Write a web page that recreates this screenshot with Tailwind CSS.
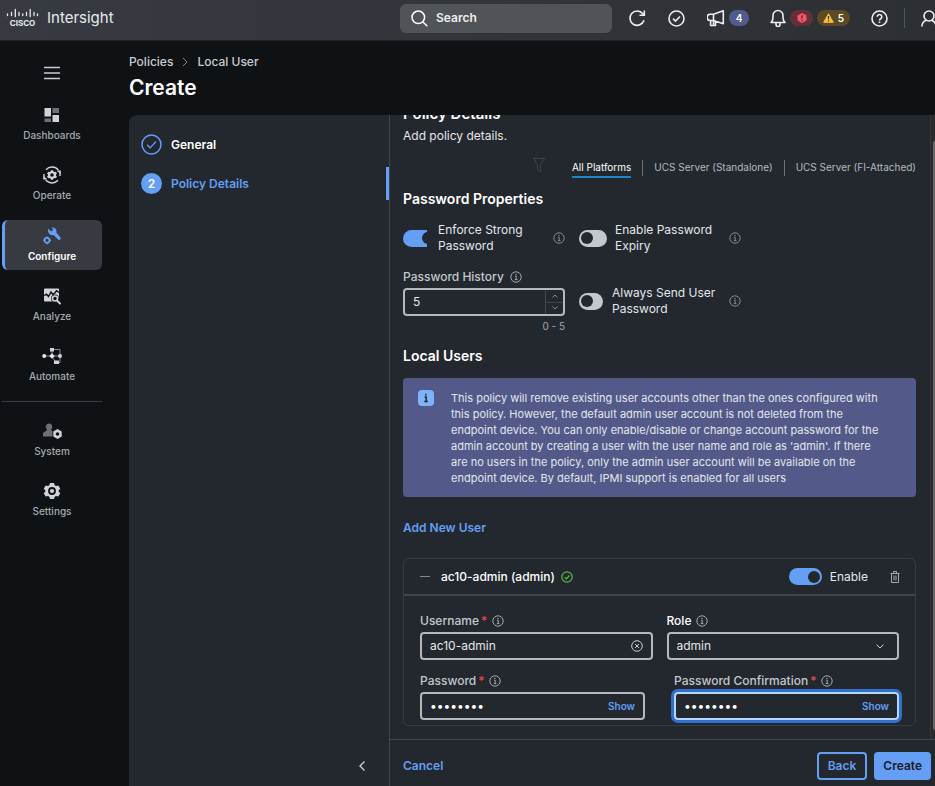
<!DOCTYPE html>
<html lang="en">

<head>
    <meta charset="UTF-8">
    <meta name="viewport" content="width=device-width, initial-scale=1.0">
    <title>Intersight - Create Policy</title>
    <script src="https://cdn.jsdelivr.net/npm/@tailwindcss/browser@4"></script>
</head>

<body class="h-screen flex flex-col overflow-hidden bg-[#0f1214] text-[#e3e6ea] text-[12px] font-['Inter',sans-serif]">

    <!-- Shared icons -->
    <svg class="hidden" aria-hidden="true">
        <symbol id="info" viewBox="0 0 12 12">
            <circle cx="6" cy="6" r="5.2" fill="none" stroke="currentColor" stroke-width="1" />
            <path d="M5 5.2h1.2v3.3M4.8 8.6h2.6" fill="none" stroke="currentColor" stroke-width="1" />
            <circle cx="6" cy="3.4" r=".7" fill="currentColor" />
        </symbol>
    </svg>

    <!-- Top bar -->
    <header class="h-[41px] shrink-0 flex items-start bg-linear-to-r from-[#373b41] to-[#2c3035] border-b border-[#1d2024] overflow-hidden">
        <a href="#" class="flex items-center gap-2 h-9 pl-[6px]">
            <svg class="w-[33px] h-[20px]" viewBox="0 0 33 20" role="img" aria-label="Cisco">
                <path d="M1.5 6v1.5M5.5 4.5v3M9.3 1.5v7M13 4.5v3M16.8 6v1.5M20.5 4.5v3M24.2 1.5v7M28 4.5v3M31.5 6v1.5" fill="none" stroke="#e8eaed" stroke-width="1.3" stroke-linecap="round" />
                <text x="16.5" y="18" text-anchor="middle" font-size="8" font-weight="700" fill="#e8eaed">CISCO</text>
            </svg>
            <span class="text-[15px] text-[#e8eaed]">Intersight</span>
        </a>
        <div class="ml-auto flex items-center h-9 -mr-[2px]">
            <label class="flex items-center gap-2 w-[212px] h-[29px] px-[11px] rounded-md bg-[#505357] text-white">
                <svg class="w-[17px] h-[17px] shrink-0" viewBox="0 0 17 17" fill="none" stroke="currentColor" stroke-width="1.5">
                    <circle cx="7.3" cy="7.3" r="6.3" />
                    <path d="M12 12l4.3 4.3" />
                </svg>
                <input type="search" placeholder="Search" aria-label="Search" class="w-full bg-transparent font-semibold placeholder:text-[#eceef0] outline-none">
            </label>
            <button class="ml-4" aria-label="Refresh">
                <svg class="w-[18px] h-[18px]" viewBox="0 0 18 18" fill="none" stroke="#eceef0" stroke-width="1.6">
                    <path d="M16 11.3A7.2 7.2 0 1 1 14.8 4.7l1 1.3" />
                    <path d="M16.3 1.5v4.8h-4.8" />
                </svg>
            </button>
            <button class="ml-[22px]" aria-label="Tasks">
                <svg class="w-[17px] h-[17px]" viewBox="0 0 17 17" fill="none" stroke="#eceef0" stroke-width="1.6">
                    <circle cx="8.5" cy="8.5" r="7.5" />
                    <path d="M5 8.7l2.5 2.4 4.5-4.6" />
                </svg>
            </button>
            <button class="ml-[22px] flex items-center gap-1" aria-label="Announcements">
                <svg class="w-[18px] h-[18px]" viewBox="0 0 18 18" fill="none" stroke="#eceef0" stroke-width="1.6" stroke-linejoin="round">
                    <path d="M6.5 5.2L16.3 1.8v13L6.5 11.5H3.3a3.1 3.1 0 0 1 0-6.3zM6.5 5.2v11.3H3.6v-5M6.5 12h2v4.5h-2" />
                </svg>
                <span class="w-5 h-4 rounded-full bg-[#535a8c] text-[10px] leading-4 text-center font-semibold text-white">4</span>
            </button>
            <button class="ml-[21px] flex items-center gap-1" aria-label="Alarms">
                <svg class="w-4 h-[18px]" viewBox="0 0 16 18" fill="none" stroke="#eceef0" stroke-width="1.6" stroke-linejoin="round">
                    <path d="M1 13.5c1.3-1.2 2-2.6 2-5V6.500a5 5 0 0 1 10 0v2c0 2.4.7 3.8 2 5zM6 14v1.5a2 2 0 0 0 4 0V14" />
                </svg>
                <span class="flex items-center justify-center w-[23px] h-4 rounded-full bg-[#633038]">
                    <svg class="w-[10px] h-[10px]" viewBox="0 0 10 10">
                        <path d="M5 0l4.5 2.5v5L5 10 .5 7.5v-5z" fill="#f2566a" />
                        <path d="M5 2.2v3.4M5 6.7v1.3" stroke="#5a1d26" stroke-width="1.2" />
                    </svg>
                </span>
                <span class="flex items-center justify-center gap-1 w-[33px] h-4 rounded-full bg-[#5b4a23] text-[10px] font-semibold text-white">
                    <svg class="w-[11px] h-[10px]" viewBox="0 0 11 10">
                        <path d="M5.5.8L10.3 9.3H.7z" fill="#f3c043" stroke="#f3c043" stroke-linejoin="round" />
                        <path d="M5.5 3v3.3M5.5 7.3v1.2" stroke="#4d3b12" stroke-width="1.2" />
                    </svg>
                    5
                </span>
            </button>
            <button class="ml-[21px]" aria-label="Help">
                <svg class="w-[17px] h-[17px]" viewBox="0 0 17 17" fill="none" stroke="#eceef0" stroke-width="1.6">
                    <circle cx="8.5" cy="8.5" r="7.5" />
                    <path d="M6.2 6.8a2.3 2.3 0 1 1 3.5 2c-.9.5-1.2.8-1.2 1.6M8.5 11.4v1.5" />
                </svg>
            </button>
            <span class="ml-4 w-px h-5 bg-[#50555b]"></span>
            <button class="ml-4" aria-label="Account">
                <svg class="w-[16px] h-[17px]" viewBox="0 0 16 17" fill="none" stroke="#eceef0" stroke-width="1.6">
                    <circle cx="8" cy="6" r="5" />
                    <path d="M.8 16.5c.3-3 2-5.3 4.5-6.2M15.2 16.5c-.3-3-2-5.3-4.5-6.2" />
                </svg>
            </button>
        </div>
    </header>

    <div class="flex flex-1 min-h-0">

        <!-- Sidebar -->
        <nav class="w-[129px] shrink-0 pl-[2px] pr-[27px] pt-[25px] text-[10px] leading-4 font-medium text-[#a4a9af]">
            <button class="block mx-auto" aria-label="Menu">
                <svg class="w-4 h-[14px]" viewBox="0 0 16 14" stroke="#c9ccd1" stroke-width="1.5">
                    <path d="M0 1.5h16M0 7h16M0 12.5h16" />
                </svg>
            </button>
            <div class="flex flex-col gap-[10px] mt-5">
                <a href="#" class="h-[50px] flex flex-col items-center gap-[3px] pt-[6px]">
                    <svg class="w-[18px] h-[18px]" viewBox="0 0 18 18">
                        <path d="M1.5 2H8v8.5H1.5zM9.5 9H16v7H9.5z" fill="#d0d3d8" />
                        <path d="M9.5 2H16v5H9.5zM1.5 12.5H8V16H1.5z" fill="#6d7176" />
                    </svg>
                    Dashboards
                </a>
                <a href="#" class="h-[50px] flex flex-col items-center gap-[3px] pt-[6px]">
                    <svg class="w-[18px] h-[18px] text-[#d0d3d8]" viewBox="0 0 18 18">
                        <path d="M3 3.7a8 8 0 0 1 12.5.6M15 14.3a8 8 0 0 1-12.5-.6M1 8v4.5M17 10V5.5" fill="none" stroke="currentColor" stroke-width="1.4" />
                        <path d="M13.8 5l3.9-.8-.2 3.6zM4.2 13l-3.9.8.2-3.6z" fill="currentColor" />
                        <path d="M8 4.3h2l.5 1.2 1 .5 1.4-.2 1 1.7-.9 1v1l.9 1-1 1.7-1.4-.2-1 .5-.5 1.2H8l-.5-1.2-1-.5-1.4.2-1-1.7.9-1v-1l-.9-1 1-1.7 1.4.2 1-.5zM9 7.200a1.8 1.8 0 1 0 0 3.6 1.8 1.8 0 0 0 0-3.6z" fill="currentColor" fill-rule="evenodd" />
                    </svg>
                    Operate
                </a>
                <a href="#" aria-current="page" class="h-[50px] flex flex-col items-center gap-[3px] pt-[7px] pr-[3px] rounded-md border-l-3 border-[#649ef5] bg-[#373b41] text-white font-semibold">
                    <svg class="w-[18px] h-[18px]" viewBox="0 0 18 18" fill="#649ef5">
                        <path d="M5.3 1.8L8.2 4.5 10.3 2.6 8.5.6c2.8-.8 5.7 1.6 4.8 5l4.2 4.8c1 1.4-.9 3.2-2.3 2.2L10.5 8C7.3 9 4 5.5 5.3 1.8z" />
                        <circle cx="4" cy="13.3" r="2.5" fill="none" stroke="#649ef5" stroke-width="1.8" />
                        <path d="M4 9.5v1M4 16v1.2M.2 13.3h1M7 13.3h1" stroke="#649ef5" stroke-width="1.4" />
                    </svg>
                    Configure
                </a>
                <a href="#" class="h-[50px] flex flex-col items-center gap-[3px] pt-[7px]">
                    <svg class="w-[18px] h-[18px]" viewBox="0 0 18 18">
                        <path d="M2 1.5h13a1 1 0 0 1 1 1v12H2a1 1 0 0 1-1-1v-11a1 1 0 0 1 1-1z" fill="#d0d3d8" />
                        <path d="M1 8.5l2.5-1.3 2 2.3 2.5-4.5 2 2.5 2-1.8 1.5-2L16 5.500" fill="none" stroke="#0f1214" stroke-width="1.4" />
                        <circle cx="12" cy="11.5" r="3.9" fill="#0f1214" />
                        <path d="M14 13l3.5 4" stroke="#0f1214" stroke-width="4" />
                        <circle cx="12" cy="11.5" r="2.5" fill="#0f1214" stroke="#d0d3d8" stroke-width="1.6" />
                        <path d="M14 13.5l3.5 3.5" stroke="#d0d3d8" stroke-width="1.9" />
                    </svg>
                    Analyze
                </a>
                <a href="#" class="h-[50px] flex flex-col items-center gap-[3px] pt-[7px]">
                    <svg class="w-5 h-[18px]" viewBox="0 0 20 18">
                        <path d="M2 9h16M10 9V2.5h8V15.5h-4.5L10 9" fill="none" stroke="#85898e" stroke-width="1" />
                        <path d="M8 1h4v3.5H8zM12 13.5h5V17h-5z" fill="#d0d3d8" />
                        <circle cx="2.2" cy="9" r="2" fill="#e6e8eb" />
                        <path d="M10 6.3L12.7 9 10 11.7 7.3 9z" fill="#e6e8eb" />
                        <circle cx="18" cy="9" r="2" fill="#d0d3d8" />
                    </svg>
                    Automate
                </a>
            </div>
            <hr class="mt-[11px] mb-[13px] border-[#3b3f44]">
            <div class="flex flex-col gap-[10px]">
                <a href="#" class="h-[50px] flex flex-col items-center gap-[3px] pt-[7px]">
                    <svg class="w-5 h-[18px]" viewBox="0 0 20 18">
                        <path d="M7 1.5a3.2 3.2 0 0 1 2.3 5.5v1.3l1.2 1v5.2H1V12c0-1.7 1.9-2.5 3.7-3.2V7A3.2 3.2 0 0 1 7 1.5z" fill="#6d7176" />
                        <path d="M15.5 7l4.2 2.5v5l-4.2 2.5-4.2-2.5v-5z" fill="#d0d3d8" />
                        <circle cx="15.5" cy="12" r="1.8" fill="#0f1214" />
                    </svg>
                    System
                </a>
                <a href="#" class="h-[50px] flex flex-col items-center gap-[3px] pt-[7px]">
                    <svg class="w-[18px] h-[18px]" viewBox="0 0 18 18">
                        <path d="M7 1h4l.7 2.2 1.3.8 2.3-.6 2 3.4L15.7 8.3v1.4l1.6 1.5-2 3.4-2.3-.6-1.3.8L11 17H7l-.7-2.2L5 14l-2.3.6-2-3.4 1.6-1.5V8.3L.7 6.8l2-3.4L5 4l1.3-.8z" fill="#d0d3d8" />
                        <circle cx="9" cy="9" r="3" fill="none" stroke="#0f1214" stroke-width="1.8" />
                    </svg>
                    Settings
                </a>
            </div>
        </nav>

        <div class="flex-1 min-w-0 flex flex-col">
            <div class="h-[74px] shrink-0 pt-[13px]">
                <div class="flex items-center gap-2 leading-4 font-medium text-[#c9ccd1]">
                    <a href="#">Policies</a>
                    <svg class="w-2 h-2" viewBox="0 0 8 8" fill="none" stroke="#85898e"><path d="M2 0l4 4-4 4" /></svg>
                    <a href="#">Local User</a>
                </div>
                <h1 class="mt-[6px] text-[21px] leading-6 font-semibold text-white">Create</h1>
            </div>

            <div class="flex-1 min-h-0 flex rounded-tl-lg bg-[#23282e]">

                <!-- Wizard steps -->
                <div class="w-[261px] shrink-0 flex flex-col border-r border-[#40454b] pt-[13px] font-semibold">
                    <a href="#" class="flex items-center gap-[9px] h-[33px] pl-3 text-white">
                        <svg class="w-[21px] h-[21px]" viewBox="0 0 21 21" fill="none" stroke="#649ef5">
                            <circle cx="10.5" cy="10.5" r="9.5" stroke-width="1.5" />
                            <path d="M6 10.8l3.2 3L15 7.5" stroke-width="1.2" />
                        </svg>
                        General
                    </a>
                    <a href="#" class="mt-[6px] flex items-center gap-[9px] h-[33px] pl-3 border-r-3 border-[#649ef5] text-[#649ef5]">
                        <span class="w-[21px] h-[21px] rounded-full bg-[#649ef5] text-center leading-[21px] text-white">2</span>
                        Policy Details
                    </a>
                    <button class="mt-auto ml-auto mr-6 mb-[15px]" aria-label="Collapse">
                        <svg class="w-[6px] h-[10px]" viewBox="0 0 6 10" fill="none" stroke="#d0d3d8" stroke-width="1.3"><path d="M5.5.5L1 5l4.5 4.5" /></svg>
                    </button>
                </div>

                <div class="flex-1 min-w-0 flex flex-col">
                    <div class="flex-1 min-h-0 flex overflow-hidden">
                        <form id="policy" class="flex-1 min-w-0 pl-[13px] pr-[14px] -mt-[11px]">
                            <h2 class="text-[15px] leading-5 font-semibold text-white">Policy Details</h2>
                            <p class="mt-[2px] leading-5">Add policy details.</p>

                            <div class="mt-3 flex items-start justify-end text-[10px] leading-[18px] text-[#b4b8be]">
                                <svg class="w-3 h-[14px] mr-[27px]" viewBox="0 0 12 14" fill="none" stroke="#40454b"><path d="M.5.5h11L7.5 6.5v7l-3-2v-5z" /></svg>
                                <button type="button" class="border-b-2 border-[#1b87c5] text-white">All Platforms</button>
                                <span class="mx-[11px] w-px h-4 mt-[2px] bg-[#6d7176]"></span>
                                <button type="button">UCS Server (Standalone)</button>
                                <span class="mx-[11px] w-px h-4 mt-[2px] bg-[#6d7176]"></span>
                                <button type="button">UCS Server (FI-Attached)</button>
                            </div>

                            <h3 class="mt-[11px] text-[14px] leading-5 font-semibold text-white">Password Properties</h3>

                            <div class="mt-[13px] grid grid-cols-[162px_162px] gap-x-[14px] leading-4">
                                <div class="flex items-center">
                                    <input id="strong" type="checkbox" role="switch" checked class="appearance-none shrink-0 w-6 h-[17px] rounded-l-full bg-[#649ef5] overflow-hidden flex items-center before:content-[''] before:shrink-0 before:w-3 before:h-3 before:rounded-full before:bg-[#23282e] before:ml-[19px]">
                                    <label for="strong" class="ml-[11px] w-[90px]">Enforce Strong Password</label>
                                    <svg class="w-3 h-3 ml-auto text-[#85898e]"><use href="#info" /></svg>
                                </div>
                                <div class="flex items-center">
                                    <input id="expiry" type="checkbox" role="switch" class="appearance-none shrink-0 w-7 h-[17px] rounded-full bg-[#c3c7cf] flex items-center before:content-[''] before:w-3 before:h-3 before:rounded-full before:bg-[#23282e] before:ml-[2px]">
                                    <label for="expiry" class="ml-2 w-[100px]">Enable Password Expiry</label>
                                    <svg class="w-3 h-3 ml-auto text-[#85898e]"><use href="#info" /></svg>
                                </div>
                                <div class="mt-[15px]">
                                    <div class="flex items-center gap-[6px] font-medium text-[#c3c7cc]">
                                        <label for="history">Password History</label>
                                        <svg class="w-3 h-3 text-[#a4a9af]"><use href="#info" /></svg>
                                    </div>
                                    <div class="mt-[3px] h-7 flex rounded border-2 border-[#b4b8be] overflow-hidden">
                                        <input id="history" type="text" inputmode="numeric" value="5" class="flex-1 min-w-0 pl-2 outline-none">
                                        <div class="w-[18px] flex flex-col border-l border-[#40454b] text-[#85898e]">
                                            <button type="button" aria-label="Increase" class="flex-1 flex items-center justify-center border-b border-[#40454b]">
                                                <svg class="w-[6px] h-1" viewBox="0 0 6 4" fill="none" stroke="currentColor"><path d="M.5 3.5L3 1l2.5 2.5" /></svg>
                                            </button>
                                            <button type="button" aria-label="Decrease" class="flex-1 flex items-center justify-center">
                                                <svg class="w-[6px] h-1" viewBox="0 0 6 4" fill="none" stroke="currentColor"><path d="M.5.5L3 3 5.5.5" /></svg>
                                            </button>
                                        </div>
                                    </div>
                                    <p class="mt-1 text-right text-[10px] leading-3 text-[#a4a9af]">0 - 5</p>
                                </div>
                                <div class="mt-[31px] h-8 flex items-center">
                                    <input id="always" type="checkbox" role="switch" class="appearance-none shrink-0 w-6 h-[17px] rounded-full bg-[#c3c7cf] flex items-center before:content-[''] before:w-3 before:h-3 before:rounded-full before:bg-[#23282e] before:ml-[2px]">
                                    <label for="always" class="ml-[9px] w-[110px]">Always Send User Password</label>
                                    <svg class="w-3 h-3 ml-auto text-[#85898e]"><use href="#info" /></svg>
                                </div>
                            </div>

                            <h3 class="mt-[14px] text-[14px] leading-5 font-semibold text-white">Local Users</h3>

                            <div class="mt-3 flex items-start gap-[17px] rounded pl-[15px] pr-[33px] pt-3 pb-[11px] bg-[#535a8a]">
                                <svg class="w-4 h-4 shrink-0" viewBox="0 0 16 16">
                                    <rect width="16" height="16" rx="4" fill="#80b1fb" />
                                    <path d="M6.5 7h1.7v4.5M6.3 11.5h3.6M7.9 3.8v1.6" fill="none" stroke="#23282e" stroke-width="1.4" />
                                </svg>
                                <p class="text-[11px] leading-4">This policy will remove existing user accounts other than the ones configured with this policy. However, the default admin user account is not deleted from the endpoint device. You can only enable/disable or change account password for the admin account by creating a user with the user name and role as 'admin'. If there are no users in the policy, only the admin user account will be available on the endpoint device. By default, IPMI support is enabled for all users</p>
                            </div>

                            <button type="button" class="mt-[21px] block leading-5 font-semibold text-[#649ef5]">Add New User</button>

                            <div class="mt-5 h-[168px] rounded-md border border-[#373c42]">
                                <div class="h-[37px] flex items-center pl-4 pr-[15px] border-b-2 border-[#40454b] font-medium">
                                    <button type="button" aria-label="Collapse user" class="w-[10px] h-px bg-[#85898e]"></button>
                                    <span class="ml-[11px] text-white">ac10-admin (admin)</span>
                                    <svg class="ml-[6px] w-3 h-3" viewBox="0 0 12 12" fill="none" stroke="#5fb843" stroke-width="1.2">
                                        <circle cx="6" cy="6" r="5.2" />
                                        <path d="M3.7 6.2l1.7 1.6 3-3.3" />
                                    </svg>
                                    <input id="enable" type="checkbox" role="switch" checked class="ml-auto appearance-none w-[33px] h-[17px] rounded-full bg-[#649ef5] flex items-center before:content-[''] before:w-3 before:h-3 before:rounded-full before:bg-[#23282e] before:ml-[19px]">
                                    <label for="enable" class="ml-2 font-normal">Enable</label>
                                    <button type="button" aria-label="Delete user" class="ml-[22px]">
                                        <svg class="w-[10px] h-3" viewBox="0 0 10 12" fill="none" stroke="#a4a9af"><path d="M.5 2.5h9M3.5 2V.5h3V2M1.5 2.5v9h7v-9M4 4.5v5M6 4.5v5" /></svg>
                                    </button>
                                </div>
                                <div class="px-4 pt-[17px] leading-4">
                                    <div class="grid grid-cols-2 gap-x-[14px]">
                                        <div>
                                            <div class="flex items-center font-medium text-[#c3c7cc]">
                                                <label for="username">Username</label>
                                                <span class="ml-[2px] text-[#e5484d]">*</span>
                                                <svg class="ml-[5px] w-3 h-3 text-[#a4a9af]"><use href="#info" /></svg>
                                            </div>
                                            <div class="mt-[3px] h-7 flex items-center rounded border-2 border-[#b4b8be] px-2">
                                                <input id="username" type="text" value="ac10-admin" class="flex-1 min-w-0 outline-none">
                                                <button type="button" aria-label="Clear">
                                                    <svg class="block w-3 h-3" viewBox="0 0 12 12" fill="none" stroke="#c9ccd1"><circle cx="6" cy="6" r="5.3" /><path d="M4 4l4 4M8 4L4 8" /></svg>
                                                </button>
                                            </div>
                                        </div>
                                        <div>
                                            <div class="flex items-center font-medium text-white">
                                                <label for="role">Role</label>
                                                <svg class="ml-[5px] w-3 h-3 text-[#a4a9af]"><use href="#info" /></svg>
                                            </div>
                                            <div class="mt-[3px] h-7 flex items-center rounded border-2 border-[#b4b8be] pl-2 pr-[13px]">
                                                <select id="role" class="flex-1 min-w-0 appearance-none outline-none">
                                                    <option>admin</option>
                                                    <option>readonly</option>
                                                    <option>user</option>
                                                </select>
                                                <svg class="w-2 h-[5px]" viewBox="0 0 8 5" fill="none" stroke="#c9ccd1"><path d="M.5.5L4 4 7.5.5" /></svg>
                                            </div>
                                        </div>
                                    </div>
                                    <div class="mt-[13px] flex justify-between">
                                        <div class="w-[225px]">
                                            <div class="flex items-center font-medium text-[#c3c7cc]">
                                                <label for="password">Password</label>
                                                <span class="ml-[2px] text-[#e5484d]">*</span>
                                                <svg class="ml-[5px] w-3 h-3 text-[#a4a9af]"><use href="#info" /></svg>
                                            </div>
                                            <div class="mt-[3px] h-7 flex items-center rounded border-2 border-[#b4b8be] px-2">
                                                <input id="password" type="password" value="password" class="flex-1 min-w-0 text-white outline-none">
                                                <button type="button" class="text-[10px] font-semibold text-[#649ef5]">Show</button>
                                            </div>
                                        </div>
                                        <div class="w-[225px]">
                                            <div class="flex items-center font-medium text-[#c3c7cc]">
                                                <label for="confirm">Password Confirmation</label>
                                                <span class="ml-[2px] text-[#e5484d]">*</span>
                                                <svg class="ml-[5px] w-3 h-3 text-[#a4a9af]"><use href="#info" /></svg>
                                            </div>
                                            <div class="mt-[3px] h-7 flex items-center rounded border-2 border-[#b5d6ff] ring-3 ring-[#2f6fd0] px-2">
                                                <input id="confirm" type="password" value="password" class="flex-1 min-w-0 text-white outline-none">
                                                <button type="button" class="text-[10px] font-semibold text-[#649ef5]">Show</button>
                                            </div>
                                        </div>
                                    </div>
                                </div>
                            </div>
                        </form>
                        <!-- Scrollbar -->
                        <div class="w-[5px] pl-[2px] pt-[26px] pb-[9px] border-l border-[#3a3837] bg-[#2a2b2c]">
                            <div class="h-full rounded-l bg-[#6a6a6a]"></div>
                        </div>
                    </div>

                    <!-- Actions -->
                    <div class="h-[47px] shrink-0 flex items-center gap-[7px] pl-[13px] pr-1 pt-[6px] border-t border-[#40454b] font-semibold text-[#649ef5]">
                        <button class="mr-auto">Cancel</button>
                        <button class="h-7 px-[9px] rounded border-2 border-[#649ef5]">Back</button>
                        <button type="submit" form="policy" class="h-7 px-[9px] rounded bg-[#649ef5] text-[#1b2026]">Create</button>
                    </div>
                </div>
            </div>
        </div>
    </div>
</body>

</html>
